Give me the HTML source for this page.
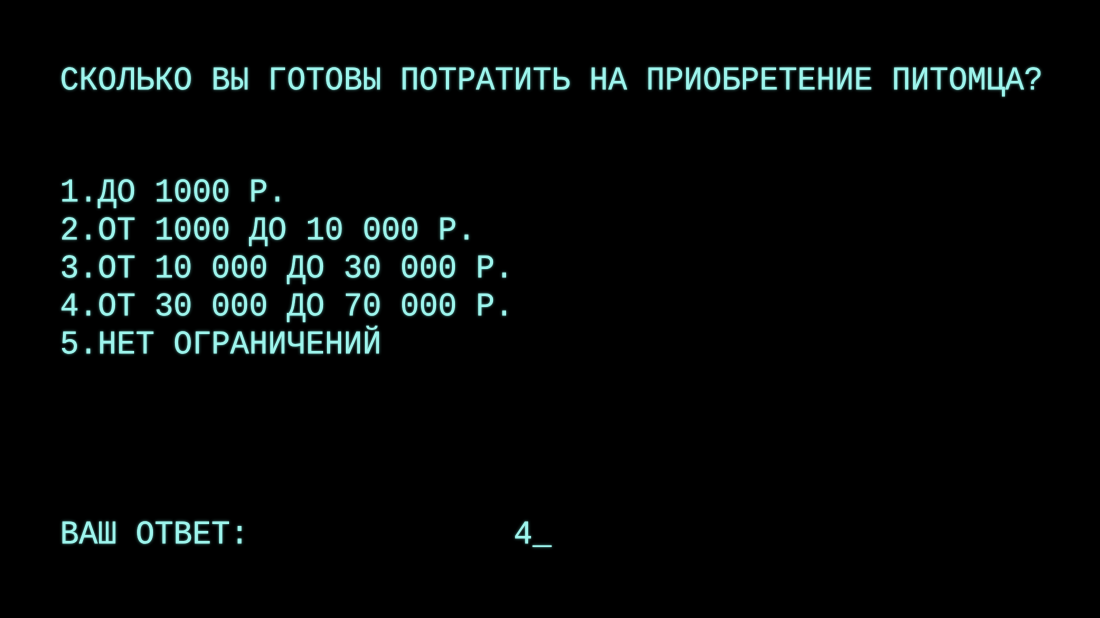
<!DOCTYPE html>
<html><head><meta charset="utf-8"><style>
html,body{margin:0;padding:0;background:#000;width:1100px;height:618px;overflow:hidden}
.t{position:absolute;left:60px;font-family:"Liberation Mono",monospace;font-size:31.5px;line-height:31.5px;color:#9ef6ee;white-space:pre;text-shadow:0 0 1px #9ef6ee,0 0 3px rgba(120,240,230,.5);font-weight:normal;transform:scaleY(1.06);transform-origin:0 0}
</style></head><body>
<div class="t" style="top:65px">СКОЛЬКО ВЫ ГОТОВЫ ПОТРАТИТЬ НА ПРИОБРЕТЕНИЕ ПИТОМЦА?</div>
<div class="t" style="top:177px">1.ДО 1000 Р.</div>
<div class="t" style="top:215px">2.ОТ 1000 ДО 10 000 Р.</div>
<div class="t" style="top:253px">3.ОТ 10 000 ДО 30 000 Р.</div>
<div class="t" style="top:291px">4.ОТ 30 000 ДО 70 000 Р.</div>
<div class="t" style="top:329px">5.НЕТ ОГРАНИЧЕНИЙ</div>
<div class="t" style="top:519px">ВАШ ОТВЕТ:              4_</div>
</body></html>
